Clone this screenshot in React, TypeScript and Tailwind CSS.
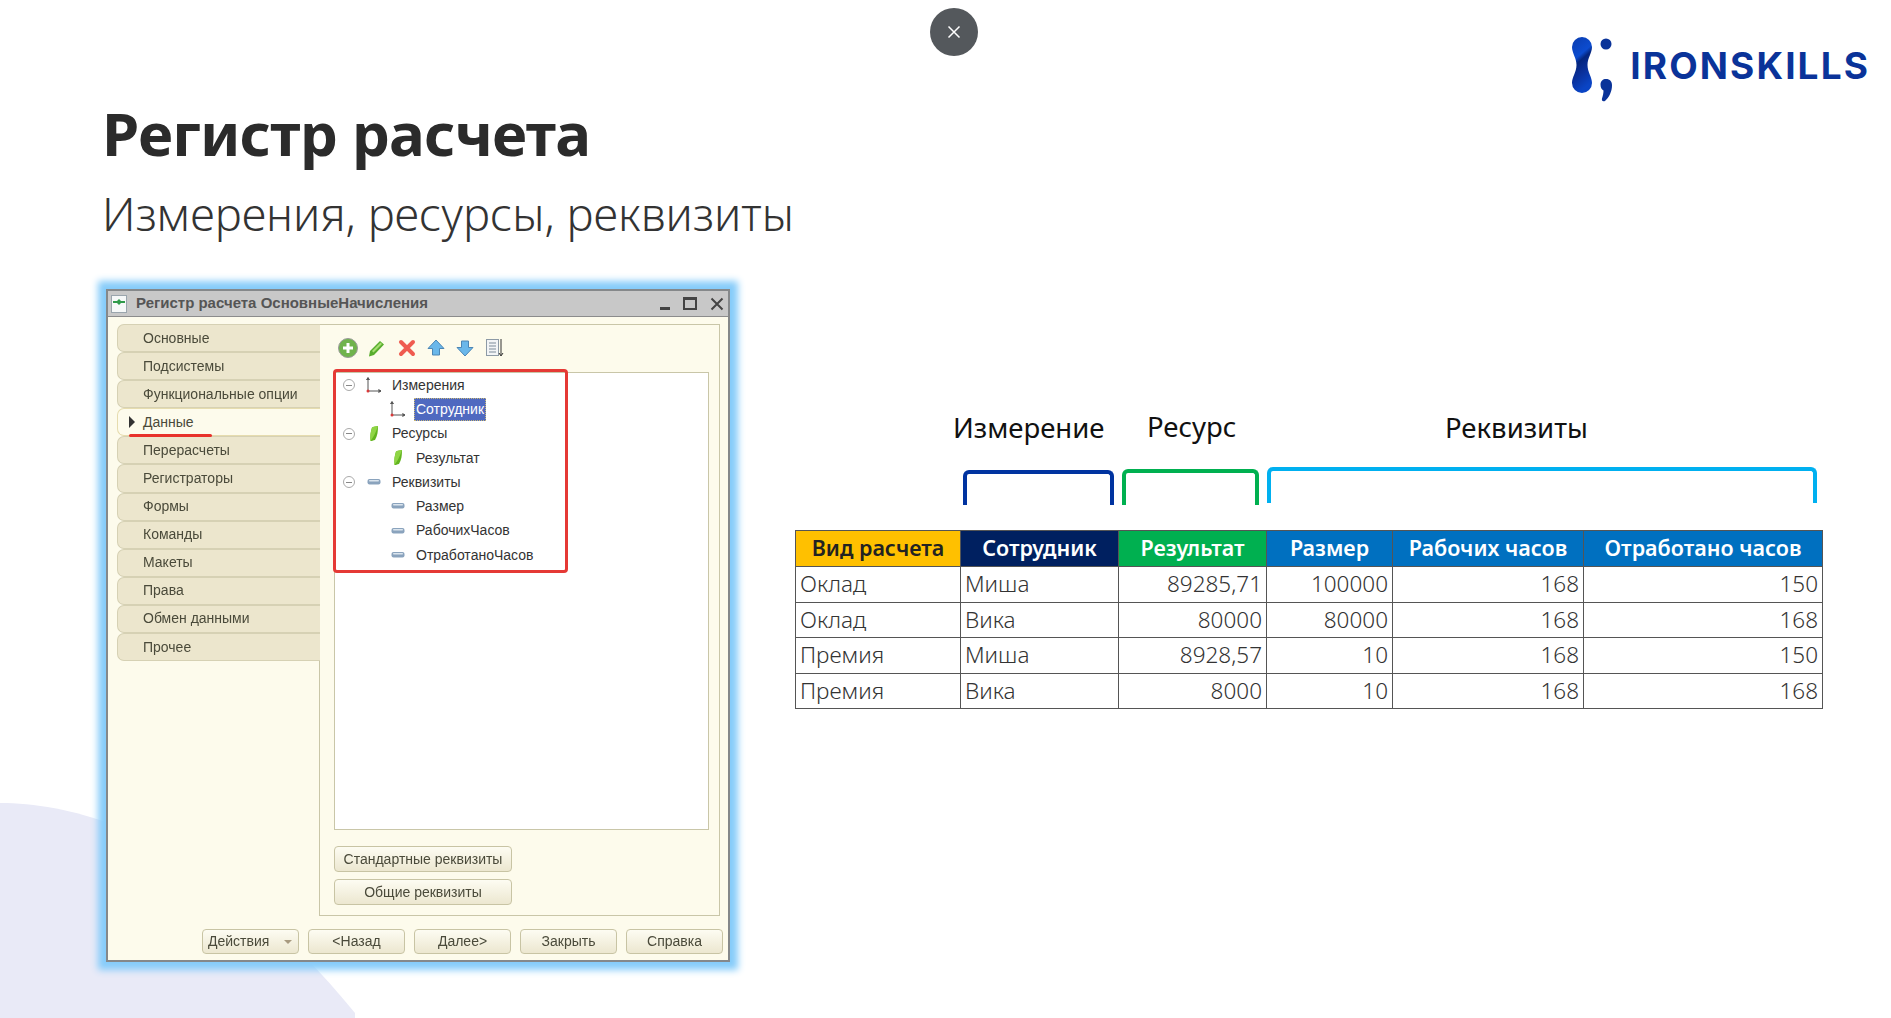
import React from "react";

const tabs = [
  "Основные",
  "Подсистемы",
  "Функциональные опции",
  "Данные",
  "Перерасчеты",
  "Регистраторы",
  "Формы",
  "Команды",
  "Макеты",
  "Права",
  "Обмен данными",
  "Прочее",
];

const tree = [
  { label: "Измерения", level: 1, icon: "axes" },
  { label: "Сотрудник", level: 2, icon: "axes", selected: true },
  { label: "Ресурсы", level: 1, icon: "leaf" },
  { label: "Результат", level: 2, icon: "leaf" },
  { label: "Реквизиты", level: 1, icon: "bar" },
  { label: "Размер", level: 2, icon: "bar" },
  { label: "РабочихЧасов", level: 2, icon: "bar" },
  { label: "ОтработаноЧасов", level: 2, icon: "bar" },
];

const rows = [
  ["Оклад", "Миша", "89285,71", "100000", "168", "150"],
  ["Оклад", "Вика", "80000", "80000", "168", "168"],
  ["Премия", "Миша", "8928,57", "10", "168", "150"],
  ["Премия", "Вика", "8000", "10", "168", "168"],
];

const TreeIcon = ({ kind }: { kind: string }) => {
  if (kind === "axes") {
    return (
      <svg width="20" height="20" viewBox="0 0 20 20" fill="none" stroke="#555" strokeWidth="1">
        <path d="M4 3v13h13" />
        <path d="M2.500 5 4 2.500 5.500 5" fill="#555" />
        <path d="M14.500 14.500 17 16l-2.500 1.500" fill="#555" />
        <circle cx="4" cy="16" r="1.500" fill="#d83a3a" stroke="none" />
      </svg>
    );
  }
  if (kind === "leaf") {
    return (
      <svg width="20" height="20" viewBox="0 0 20 20">
        <path d="M8 3.500c2.500-1 5-1.500 6-1.500 0 5-.5 10-3 14-1.500.5-3.500 1-4.500 1-.5-5 0-9 1.500-13.500z" fill="#62b41f" />
        <path d="M8 3.500c2.500-1 4-1.500 6-1.500-1.500 4-3 9-7.500 15-.5-5 0-9 1.500-13.500z" fill="#8fd545" />
      </svg>
    );
  }
  return (
    <svg width="20" height="20" viewBox="0 0 20 20">
      <rect x="3.500" y="7" width="13" height="5.500" rx="2" fill="#8aa3bd" />
      <rect x="5" y="8" width="10" height="1.500" rx="0.700" fill="#dbe5ee" />
    </svg>
  );
};

const Toolbar = () => (
  <div className="flex gap-[9.300px] ml-[4px] h-[20px]">
    <svg width="20" height="20" viewBox="0 0 20 20">
      <circle cx="10" cy="10" r="9.500" fill="#6fb34c" stroke="#9a9a9a" />
      <path d="M10 5v10M5 10h10" stroke="#fff" strokeWidth="3" />
    </svg>
    <svg width="20" height="20" viewBox="0 0 20 20">
      <path d="M3 13 13 3l4 3.500L7 17l-5 1.500z" fill="#58ad2e" />
      <path d="M5 13 13.500 4.500l1.500 1.500L6.500 14.500z" fill="#a6df72" />
    </svg>
    <svg width="20" height="20" viewBox="0 0 20 20">
      <path d="M4 4l12 12M16 4 4 16" stroke="#ef5b50" strokeWidth="4" strokeLinecap="round" />
    </svg>
    <svg width="20" height="20" viewBox="0 0 20 20">
      <path d="M10 2 18 10.500h-4.500V17h-7v-6.500H2z" fill="#6ab7ea" stroke="#4c86b5" />
    </svg>
    <svg width="20" height="20" viewBox="0 0 20 20">
      <path d="M10 18 18 9.500h-4.500V3h-7v6.500H2z" fill="#6ab7ea" stroke="#4c86b5" />
    </svg>
    <svg width="20" height="20" viewBox="0 0 20 20">
      <rect x="2.500" y="1.500" width="12" height="16" fill="#f2f4f6" stroke="#8d9aa6" />
      <path d="M5 5h7M5 8h7M5 11h7M5 14h7" stroke="#7d8b99" />
      <path d="M17 1v16M15 15l2 3 2-3" stroke="#333" fill="none" />
    </svg>
  </div>
);

const WinButton = ({ children, w }: { children: React.ReactNode; w: string }) => (
  <div
    className={`${w} h-full flex items-center justify-center rounded-[4px] border border-[#c8c4a4] bg-gradient-to-b from-[#fdfcf2] to-[#ece7d0] text-[14px] text-[#4a4a3a]`}
  >
    {children}
  </div>
);

const ConfigWindow = () => (
  <div className="relative ml-[106px] w-[624px] h-[673px] flex flex-col border-2 border-[#85888a] bg-[#fdfbec] shadow-[0_0_7px_8px_#86ccfa] blur-[0.7px] font-['Liberation_Sans',sans-serif]">
    {/* Title bar */}
    <div className="h-[26px] shrink-0 flex items-center gap-[9px] pl-[3px] pr-[4px] bg-[#c8c8c8] border-b border-[#8c8c8c]">
      <svg width="16" height="18" viewBox="0 0 16 18">
        <rect x="0.500" y="0.500" width="15" height="17" fill="#f6f8f8" stroke="#9aa5ad" />
        <path d="M2 7h12" stroke="#2f9a4a" strokeWidth="2" />
        <path d="M8 4 11 7 8 10 5 7z" fill="#2f9a4a" />
      </svg>
      <span className="text-[15px] font-bold text-[#555] flex-1">Регистр расчета ОсновныеНачисления</span>
      <div className="flex items-center gap-[13px]">
        <div className="w-[10px] h-[3px] bg-[#444] mt-[10px]" />
        <div className="w-[14px] h-[13px] border-2 border-t-[3px] border-[#444]" />
        <svg width="14" height="14" viewBox="0 0 14 14">
          <path d="M1.500 1.500l11 11M12.500 1.500l-11 11" stroke="#444" strokeWidth="2" />
        </svg>
      </div>
    </div>

    <div className="flex-1 flex flex-col pt-[7px] pl-[9px]">
      <div className="flex h-[592px]">
        {/* Tabs */}
        <div className="w-[203px] -mr-px relative z-10 flex flex-col">
          {tabs.map((tab) =>
            tab === "Данные" ? (
              <div
                key={tab}
                className="relative h-[28.100px] flex items-center pl-[25px] rounded-l-[7px] border border-r-0 border-[#e6dcae] bg-[#fdfbec] text-[14px] text-[#4a4a3a]"
              >
                <span className="absolute left-[11px] top-[7px] border-y-[6px] border-y-transparent border-l-[6px] border-l-[#333]" />
                {tab}
                <span className="absolute left-[11px] top-[25px] w-[83px] h-[3px] rounded-full bg-[#e8322b]" />
              </div>
            ) : (
              <div
                key={tab}
                className="h-[28.100px] flex items-center pl-[25px] rounded-l-[7px] border border-r-0 border-[#d6d1b4] bg-[#ece6cd] text-[14px] text-[#4a4a3a]"
              >
                {tab}
              </div>
            )
          )}
        </div>

        {/* Panel */}
        <div className="w-[401px] flex flex-col pl-[14px] pt-[13px] border border-[#c9c6a8]">
          <Toolbar />
          <div className="relative mt-[14px] w-[375px] h-[458px] bg-white border border-[#c9c6a8]">
            {tree.map((node) => (
              <div key={node.label} className="relative h-[24.300px] flex items-center text-[14px] text-[#333]">
                {node.level === 1 ? (
                  <>
                    <span className="absolute left-[8px] top-[6px] w-[12px] h-[12px] rounded-full border border-[#aaa] flex items-center justify-center">
                      <span className="w-[6px] h-px bg-[#888]" />
                    </span>
                    <span className="absolute left-[29px] top-[2px]">
                      <TreeIcon kind={node.icon} />
                    </span>
                    <span className="ml-[57px]">{node.label}</span>
                  </>
                ) : (
                  <>
                    <span className="absolute left-[53px] top-[2px]">
                      <TreeIcon kind={node.icon} />
                    </span>
                    {node.selected ? (
                      <span className="ml-[79px] h-[23px] px-[1px] flex items-center bg-[#4f69c0] text-white border border-dotted border-[#c8b878]">
                        {node.label}
                      </span>
                    ) : (
                      <span className="ml-[81px]">{node.label}</span>
                    )}
                  </>
                )}
              </div>
            ))}
            {/* Red highlight */}
            <div className="absolute left-[-2px] top-[-4px] w-[235px] h-[204px] border-[3px] border-[#e53935] rounded-[4px]" />
          </div>
          <div className="mt-[16px] h-[26px]">
            <WinButton w="w-[178px]">Стандартные реквизиты</WinButton>
          </div>
          <div className="mt-[7px] h-[26px]">
            <WinButton w="w-[178px]">Общие реквизиты</WinButton>
          </div>
        </div>
      </div>

      {/* Bottom buttons */}
      <div className="mt-[13px] h-[25px] pl-[85px] flex gap-[9px]">
        <div className="w-[97px] h-full flex items-center justify-between pl-[5px] pr-[6px] rounded-[4px] border border-[#c8c4a4] bg-gradient-to-b from-[#fdfcf2] to-[#ece7d0] text-[14px] text-[#4a4a3a]">
          Действия
          <span className="border-x-[4px] border-x-transparent border-t-[4px] border-t-[#a89a80]" />
        </div>
        <WinButton w="w-[97px]">&lt;Назад</WinButton>
        <WinButton w="w-[97px]">Далее&gt;</WinButton>
        <WinButton w="w-[97px]">Закрыть</WinButton>
        <WinButton w="w-[97px]">Справка</WinButton>
      </div>
    </div>
  </div>
);

const Logo = () => (
  <div className="flex items-start gap-[16px] mt-[37px]">
    <svg width="42" height="65" viewBox="0 0 42 65">
      <defs>
        <linearGradient id="logoFill" x1="0" y1="0" x2="0.300" y2="1">
          <stop offset="0" stopColor="#0a3cae" />
          <stop offset="0.400" stopColor="#0c4cd0" />
          <stop offset="0.500" stopColor="#04257e" />
          <stop offset="0.700" stopColor="#0a2f98" />
          <stop offset="1" stopColor="#0a44c4" />
        </linearGradient>
      </defs>
      <path
        d="M10 0a10 10 0 0 1 10 10c0 6-4.500 11-4.500 18s4.500 12 4.500 18a10 10 0 0 1-20 0c0-6 4.500-11 4.500-18S0 16 0 10A10 10 0 0 1 10 0z"
        fill="url(#logoFill)"
      />
      <circle cx="34" cy="7" r="5.500" fill="#0a3399" />
      <path d="M34 42c4 0 6 2.500 6 6.500 0 6-3 12-7 15.500-2.500 1-3.500-.5-3-2.500 1-3 1.500-6 1.500-8-2-1-3-3-3-6 0-3.500 2.500-5.500 5.500-5.500z" fill="#0a3399" />
    </svg>
    <span className="mt-[7px] text-[37px] leading-[44px] font-bold tracking-[2.100px] text-[#0a3399] font-['Inter',sans-serif]">
      IRONSKILLS
    </span>
  </div>
);

const DataTable = () => (
  <table className="mt-[25px] w-[1027px] table-fixed border-collapse text-[22.500px] font-light text-[#333] font-['Noto_Sans',sans-serif]">
    <colgroup>
      <col className="w-[165px]" />
      <col className="w-[158px]" />
      <col className="w-[148px]" />
      <col className="w-[126px]" />
      <col className="w-[191px]" />
      <col className="w-[239px]" />
    </colgroup>
    <thead>
      <tr className="h-[36px] text-[21.500px] font-semibold text-white">
        <th className="bg-[#ffc000] text-[#222] border border-[#555] font-semibold">Вид расчета</th>
        <th className="bg-[#002060] border border-[#555] font-semibold">Сотрудник</th>
        <th className="bg-[#00b050] border border-[#555] font-semibold">Результат</th>
        <th className="bg-[#0070c0] border border-[#555] font-semibold">Размер</th>
        <th className="bg-[#0070c0] border border-[#555] font-semibold">Рабочих часов</th>
        <th className="bg-[#0070c0] border border-[#555] font-semibold">Отработано часов</th>
      </tr>
    </thead>
    <tbody>
      {rows.map((row, i) => (
        <tr key={i} className="h-[35.600px]">
          {row.map((cell, j) => (
            <td
              key={j}
              className={`border border-[#555] px-[4px] leading-none ${j > 1 ? "text-right" : "text-left"}`}
            >
              {cell}
            </td>
          ))}
        </tr>
      ))}
    </tbody>
  </table>
);

export default function App() {
  return (
    <div className="relative w-full h-[1018px] overflow-hidden bg-white">
      {/* Background shape */}
      <svg className="absolute left-0 bottom-0" width="360" height="220" viewBox="0 0 360 220">
        <path d="M0 5C90 5 220 50 355 215V220H0z" fill="#e9eaf7" />
      </svg>

      {/* Close button */}
      <div className="absolute left-[930px] top-[8px] w-[48px] h-[48px] rounded-full bg-[#54585c] flex items-center justify-center">
        <svg width="14" height="14" viewBox="0 0 14 14">
          <path d="M1.500 1.500l11 11M12.500 1.500l-11 11" stroke="#fff" strokeWidth="1.500" />
        </svg>
      </div>

      <div className="relative flex flex-col">
        {/* Header */}
        <header className="h-[289px] flex justify-between pl-[102px] pr-[21px]">
          <div className="pt-[92px]">
            <h1 className="text-[60px] leading-[82px] font-bold tracking-[-0.800px] text-[#2b2b2b] font-['Noto_Sans',sans-serif]">
              Регистр расчета
            </h1>
            <p className="mt-[8px] text-[45.500px] leading-[62px] font-light text-[#333] font-['Noto_Sans',sans-serif]">
              Измерения, ресурсы, реквизиты
            </p>
          </div>
          <Logo />
        </header>

        <main className="flex">
          <ConfigWindow />

          {/* Table side */}
          <section className="ml-[65px] w-[1027px] pt-[119px]">
            <div className="h-[40px] flex items-center text-[27.500px] text-[#111] font-['Noto_Sans',sans-serif]">
              <span className="ml-[158px] w-[160px]">Измерение</span>
              <span className="ml-[34px] w-[95px] -mt-[2px]">Ресурс</span>
              <span className="ml-[203px]">Реквизиты</span>
            </div>
            <div className="mt-[19px] h-[38px] flex items-start ml-[168px]">
              <div className="mt-[3px] w-[151px] h-[35px] border-x-[4px] border-t-[4px] border-[#0033a0] rounded-t-[6px]" />
              <div className="ml-[8px] mt-[2px] w-[137px] h-[36px] border-x-[4px] border-t-[4px] border-[#00b050] rounded-t-[6px]" />
              <div className="ml-[8px] w-[550px] h-[36px] border-x-[4px] border-t-[4px] border-[#00b0f0] rounded-t-[6px]" />
            </div>
            <DataTable />
          </section>
        </main>
      </div>
    </div>
  );
}
